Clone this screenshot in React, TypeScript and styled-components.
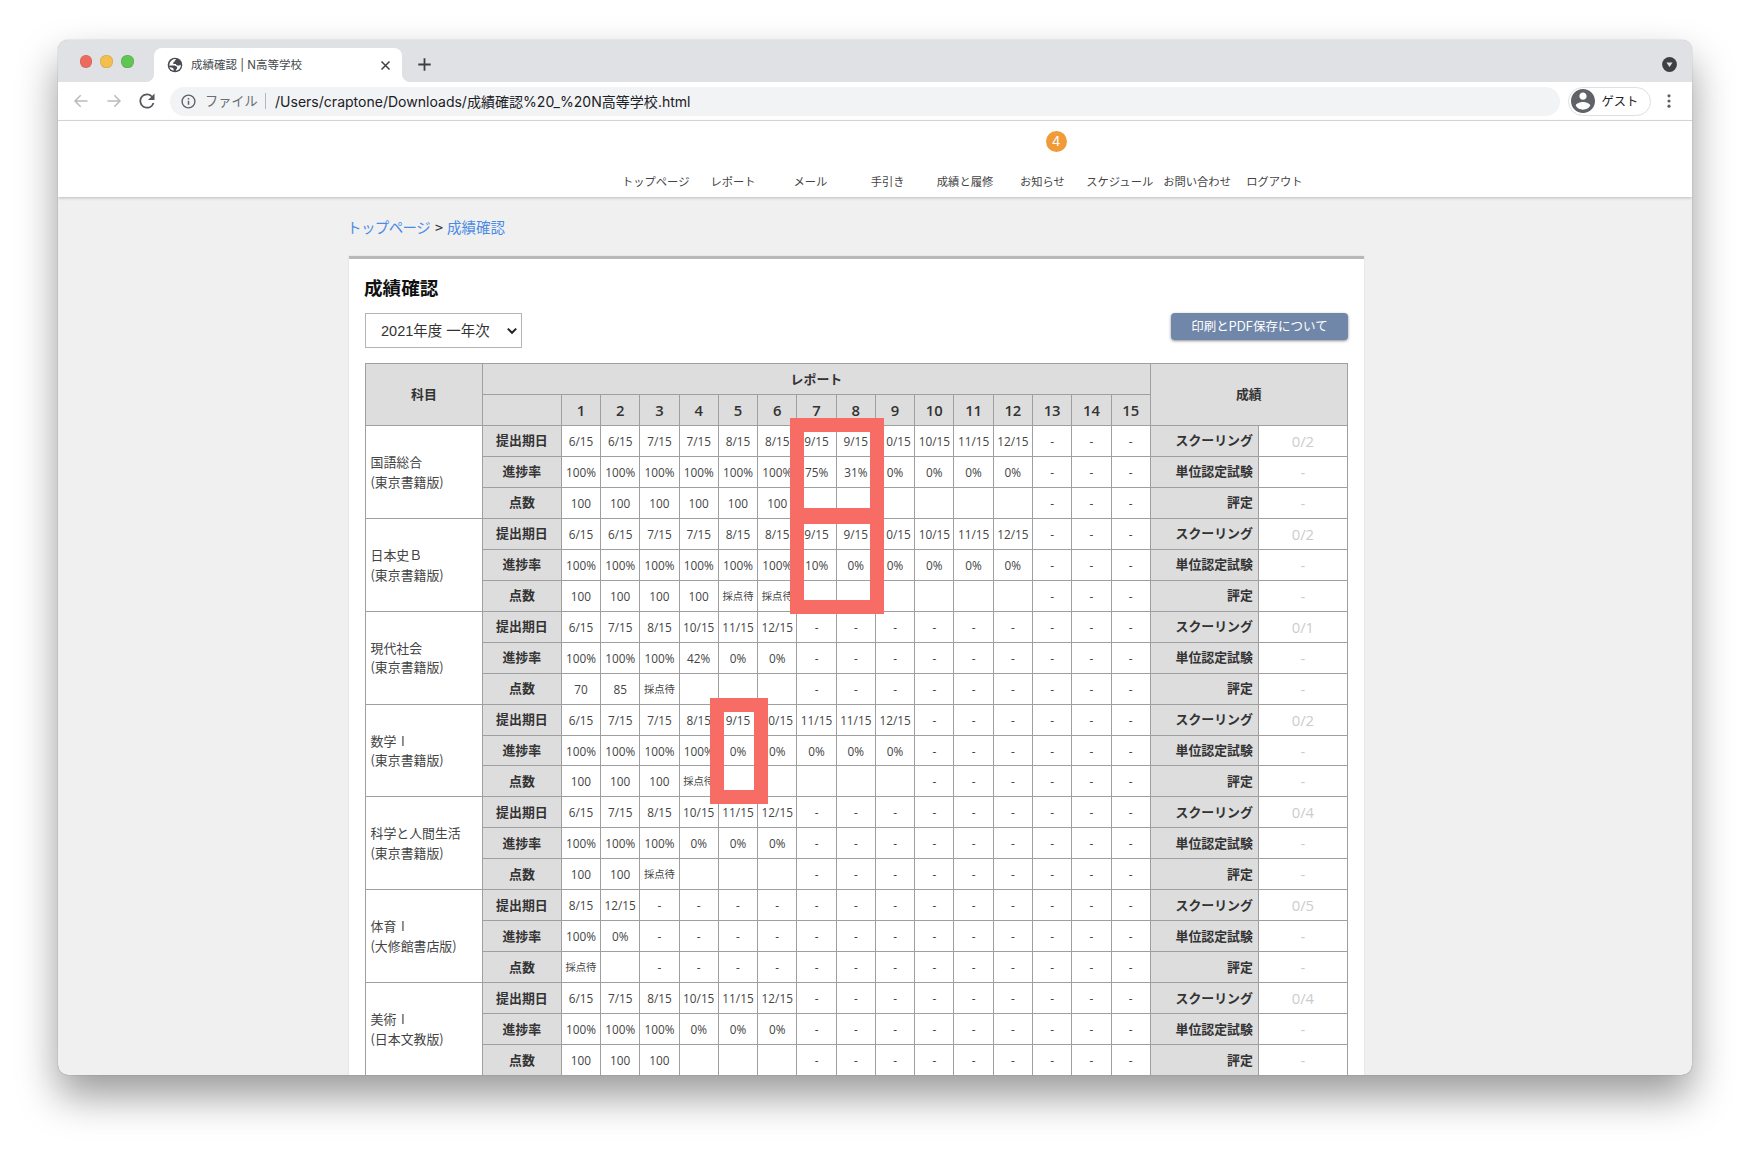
import React from 'react';
import styled, { createGlobalStyle } from 'styled-components';

const JP = `"Noto Sans CJK JP", sans-serif`;
const UI = `Inter, "Noto Sans CJK JP", sans-serif`;
const DIGITS = `"Open Sans", "Noto Sans CJK JP", sans-serif`;
const LINE = '#9f9f9f';

const GlobalStyle = createGlobalStyle`
  * { box-sizing: border-box; }
  body { margin: 0; background: #fff; font-family: ${JP}; overflow: hidden; }
  svg { display: block; flex: none; }
`;

const Desktop = styled.div`
  width: 1750px;
  height: 1152px;
  padding: 40px 58px 77px;
  overflow: hidden;
`;

const Window = styled.div`
  display: flex;
  flex-direction: column;
  height: 1035px;
  border-radius: 10px;
  overflow: hidden;
  background: #f0f0f0;
  box-shadow: 0 0 1px rgba(0, 0, 0, 0.5), 0 21px 40px rgba(0, 0, 0, 0.4);
`;

const TabStrip = styled.div`
  display: flex;
  align-items: flex-end;
  flex: none;
  height: 42px;
  background: #dfe1e5;
  padding-right: 15px;
`;

const Lights = styled.div`
  display: flex;
  align-self: flex-start;
  gap: 8px;
  width: 96px;
  padding: 15px 0 0 21.5px;
`;

const Light = styled.span<{ $color: string }>`
  width: 12.7px;
  height: 12.7px;
  border-radius: 50%;
  background: ${(p) => p.$color};
  box-shadow: inset 0 0 0 0.5px rgba(0, 0, 0, 0.15);
`;

const Tab = styled.div`
  position: relative;
  display: flex;
  align-items: center;
  width: 248px;
  height: 34px;
  padding: 0 10px 0 13px;
  border-radius: 8px 8px 0 0;
  background: #fff;
  &::before,
  &::after {
    content: '';
    position: absolute;
    bottom: 0;
    width: 8px;
    height: 8px;
  }
  &::before {
    left: -8px;
    background: radial-gradient(circle at 0 0, transparent 7.5px, #fff 8.5px);
  }
  &::after {
    right: -8px;
    background: radial-gradient(circle at 100% 0, transparent 7.5px, #fff 8.5px);
  }
`;

const TabTitle = styled.span`
  flex: 1;
  margin-left: 8px;
  font: 11.5px/16px ${UI};
  color: #45494d;
  white-space: nowrap;
`;

const NewTab = styled.div`
  flex: 1;
  padding: 0 0 11px 16px;
`;

const TabSearch = styled.div`
  padding-bottom: 10px;
`;

const Toolbar = styled.div`
  display: flex;
  align-items: center;
  flex: none;
  height: 39px;
  padding: 0 17px 0 15px;
  border-bottom: 1px solid #dadbdd;
  background: #fff;
`;

const NavButtons = styled.div`
  display: flex;
  align-items: center;
  gap: 17px;
  width: 97px;
`;

const Omnibox = styled.div`
  display: flex;
  align-items: center;
  width: 1390px;
  height: 29px;
  padding-left: 11px;
  border-radius: 15px;
  background: #f1f3f4;
  font: 14.04px/20px ${UI};
  color: #202124;
  white-space: nowrap;
`;

const Scheme = styled.span`
  width: 61px;
  margin-left: 9px;
  padding-right: 8px;
  border-right: 1px solid #b5b8bb;
  font-size: 13.2px;
  line-height: 16px;
  color: #6a6e73;
`;

const Url = styled.span`
  margin-left: 9px;
  padding-top: 1px;
`;

const Profile = styled.div`
  display: flex;
  align-items: center;
  gap: 7px;
  width: 83px;
  height: 29px;
  margin: 0 12px 0 8px;
  padding-left: 1.5px;
  border: 1px solid #dddfe1;
  border-radius: 15px;
  font: 12.3px/18px ${JP};
  color: #202124;
`;

const SiteHeader = styled.header`
  position: relative;
  display: flex;
  flex: none;
  align-items: flex-end;
  height: 76px;
  padding: 0 0 7px 559px;
  background: #fff;
  box-shadow: 0 1px 3px rgba(0, 0, 0, 0.22);
`;

const SiteLink = styled.a`
  position: relative;
  width: 77.35px;
  text-align: center;
  font-size: 11.3px;
  line-height: 18px;
  color: #444;
  white-space: nowrap;
`;

const Badge = styled.span`
  position: absolute;
  left: 42px;
  top: -41px;
  width: 21px;
  height: 21px;
  border-radius: 50%;
  background: #f19a38;
  color: #fff;
  font: 13.5px/21px ${UI};
`;

const Content = styled.main`
  width: 1015px;
  margin-left: 291px;
`;

const Breadcrumb = styled.nav`
  display: flex;
  align-items: center;
  height: 59px;
  margin-left: -2px;
  font-size: 14.5px;
  line-height: 20px;
  color: #333;
`;

const Crumb = styled.a<{ $wide?: boolean }>`
  width: ${(p) => (p.$wide ? '83px' : 'auto')};
  letter-spacing: ${(p) => (p.$wide ? '-0.6px' : '0')};
  white-space: nowrap;
  color: #4a8be4;
`;

const Separator = styled.span`
  margin: 0 4px 0 5px;
`;

const Card = styled.section`
  height: 1000px;
  padding: 0 16px;
  border-top: 3px solid #b8b8b8;
  background: #fff;
  box-shadow: 0 0 2px rgba(0, 0, 0, 0.1);
`;

const Title = styled.h1`
  margin: 0 0 0 -1px;
  padding-top: 16px;
  height: 54px;
  font-size: 18.6px;
  line-height: 24px;
  font-weight: 700;
  color: #111;
`;

const Controls = styled.div`
  display: flex;
  justify-content: space-between;
  align-items: flex-start;
  height: 50px;
`;

const YearSelect = styled.div`
  display: flex;
  align-items: center;
  justify-content: space-between;
  width: 157px;
  height: 35px;
  padding: 0 4px 0 15px;
  border: 1px solid #b4b4b4;
  font: 14.5px/20px "Liberation Sans", ${JP};
  color: #333;
`;

const HelpButton = styled.button`
  width: 177px;
  height: 27px;
  padding: 1px 0 0;
  border: 0;
  border-radius: 4px;
  background: #7187aa;
  box-shadow: 0 1px 3px rgba(0, 0, 0, 0.45);
  color: #fff;
  font: 12.5px/26px ${UI};
`;

const Grades = styled.div`
  position: relative;
  width: 983px;
  border-top: 1px solid ${LINE};
  border-left: 1px solid ${LINE};
`;

const COLUMNS = '117px 78.8px repeat(15, 39.27px) 108.1px 89.05px';

const HeadGrid = styled.div`
  display: grid;
  grid-template-columns: ${COLUMNS};
  grid-template-rows: 31px 31px;
`;

const SubjectGrid = styled.div`
  display: grid;
  grid-template-columns: ${COLUMNS};
  grid-template-rows: repeat(3, 30.96px);
`;

const Cell = styled.div<{ $small?: boolean }>`
  display: flex;
  align-items: center;
  justify-content: center;
  min-width: 0;
  border-right: 1px solid ${LINE};
  border-bottom: 1px solid ${LINE};
  background: #fff;
  color: #444;
  font-family: ${DIGITS};
  font-size: ${(p) => (p.$small ? '10.3px' : '11.8px')};
  line-height: 18px;
  white-space: nowrap;
`;

const HeadCell = styled(Cell)<{ $cols?: number; $rows?: number; $number?: boolean }>`
  grid-column: span ${(p) => p.$cols ?? 1};
  grid-row: span ${(p) => p.$rows ?? 1};
  padding-bottom: ${(p) => (p.$number ? 0 : 1)}px;
  background: #ddd;
  color: #333;
  font-family: ${(p) => (p.$number ? DIGITS : JP)};
  font-size: ${(p) => (p.$number ? '14.8px' : '12.9px')};
  font-weight: ${(p) => (p.$number ? 600 : 700)};
`;

const ResultLabel = styled(HeadCell)`
  justify-content: flex-end;
  padding-right: 5px;
`;

const ResultValue = styled(Cell)`
  font-size: 14.8px;
  color: #ccc;
`;

const SubjectName = styled(Cell)`
  grid-row: span 3;
  flex-direction: column;
  align-items: flex-start;
  padding: 0 0 0.5px 4.5px;
  font-family: ${JP};
  font-size: 12.9px;
  line-height: 19.7px;
`;

const Numeral = styled.span`
  display: inline-block;
  width: 13px;
  height: 12px;
  text-align: center;
  font: 13.6px/12px "Open Sans", sans-serif;
`;

const Marker = styled.div<{ $x: number; $y: number; $w: number; $h: number }>`
  position: absolute;
  left: ${(p) => p.$x}px;
  top: ${(p) => p.$y}px;
  width: ${(p) => p.$w}px;
  height: ${(p) => p.$h}px;
  border: 14px solid #f76d65;
`;

type Subject = {
  name: string;
  level?: string;
  publisher: string;
  due: string;
  progress: string;
  scores: string;
  schooling: string;
};

const W = '採点待';

const SUBJECTS: Subject[] = [
  {
    name: '国語総合', publisher: '(東京書籍版)', schooling: '0/2',
    due: '6/15 6/15 7/15 7/15 8/15 8/15 9/15 9/15 10/15 10/15 11/15 12/15',
    progress: '100% 100% 100% 100% 100% 100% 75% 31% 0% 0% 0% 0%',
    scores: '100 100 100 100 100 100',
  },
  {
    name: '日本史Ｂ', publisher: '(東京書籍版)', schooling: '0/2',
    due: '6/15 6/15 7/15 7/15 8/15 8/15 9/15 9/15 10/15 10/15 11/15 12/15',
    progress: '100% 100% 100% 100% 100% 100% 10% 0% 0% 0% 0% 0%',
    scores: `100 100 100 100 ${W} ${W}`,
  },
  {
    name: '現代社会', publisher: '(東京書籍版)', schooling: '0/1',
    due: '6/15 7/15 8/15 10/15 11/15 12/15',
    progress: '100% 100% 100% 42% 0% 0%',
    scores: `70 85 ${W}`,
  },
  {
    name: '数学', level: 'I', publisher: '(東京書籍版)', schooling: '0/2',
    due: '6/15 7/15 7/15 8/15 9/15 10/15 11/15 11/15 12/15',
    progress: '100% 100% 100% 100% 0% 0% 0% 0% 0%',
    scores: `100 100 100 ${W}`,
  },
  {
    name: '科学と人間生活', publisher: '(東京書籍版)', schooling: '0/4',
    due: '6/15 7/15 8/15 10/15 11/15 12/15',
    progress: '100% 100% 100% 0% 0% 0%',
    scores: `100 100 ${W}`,
  },
  {
    name: '体育', level: 'I', publisher: '(大修館書店版)', schooling: '0/5',
    due: '8/15 12/15',
    progress: '100% 0%',
    scores: W,
  },
  {
    name: '美術', level: 'I', publisher: '(日本文教版)', schooling: '0/4',
    due: '6/15 7/15 8/15 10/15 11/15 12/15',
    progress: '100% 100% 100% 0% 0% 0%',
    scores: '100 100 100',
  },
];

const NAV = ['トップページ', 'レポート', 'メール', '手引き', '成績と履修', 'お知らせ', 'スケジュール', 'お問い合わせ', 'ログアウト'];
const REPORTS = Array.from({ length: 15 }, (_, i) => i);

function SubjectRows({ subject }: { subject: Subject }) {
  const count = subject.due.split(' ').length;
  const rows = [
    { label: '提出期日', values: subject.due.split(' '), result: 'スクーリング', value: subject.schooling },
    { label: '進捗率', values: subject.progress.split(' '), result: '単位認定試験', value: '-' },
    { label: '点数', values: subject.scores.split(' '), result: '評定', value: '-' },
  ];
  return (
    <SubjectGrid>
      <SubjectName>
        <span>
          {subject.name}
          {subject.level && <Numeral>{subject.level}</Numeral>}
        </span>
        <span>{subject.publisher}</span>
      </SubjectName>
      {rows.map((row) => (
        <React.Fragment key={row.label}>
          <HeadCell>{row.label}</HeadCell>
          {REPORTS.map((i) => (
            <Cell key={i} $small={row.values[i] === W}>
              {i < count ? row.values[i] ?? '' : '-'}
            </Cell>
          ))}
          <ResultLabel>{row.result}</ResultLabel>
          <ResultValue>{row.value}</ResultValue>
        </React.Fragment>
      ))}
    </SubjectGrid>
  );
}

const GlobeIcon = () => (
  <svg width="16" height="16" viewBox="0 0 16 16">
    <circle cx="8" cy="8" r="7.3" fill="#484c50" />
    <path
      fill="#fff"
      d="M9.3 2.2C8.3 2.8 7.9 3.4 8 4.3 6.7 4.5 5.9 5.6 6.4 6.9c.9.2 1.6 0 2.5.1.3 1.3 1 1.6 2.1 1.6 1 .2 1.9-.2 2.9-.8A6 6 0 0 1 9 13.7c-.3-.5 0-1.2.4-1.5.9-.3 1-1.3.6-2.1-.8-1.2-1.9-1.5-3.2-1.6H2.1A6 6 0 0 0 6.6 13.700v-1.9l-1.4-1.1L2.3 9.900V7.900A6 6 0 0 1 9.3 2.200z"
      fillRule="evenodd"
    />
  </svg>
);

const ArrowIcon = ({ flip }: { flip?: boolean }) => (
  <svg width="16" height="16" viewBox="0 0 16 16" fill="none" stroke="#b9bbbe" strokeWidth="1.5">
    <path d={flip ? 'M1.5 8h12M8.3 2.2L14 8l-5.7 5.8' : 'M14.5 8h-12M7.7 2.2L2 8l5.7 5.8'} />
  </svg>
);

const ReloadIcon = () => (
  <svg width="16" height="16" viewBox="3.5 3.5 17 17">
    <path fill="#54585c" d="M17.65 6.35A7.958 7.958 0 0 0 12 4c-4.42 0-7.99 3.58-7.99 8s3.57 8 7.99 8c3.73 0 6.84-2.55 7.73-6h-1.9A6.2 6.2 0 0 1 12 18.2 6.2 6.2 0 1 1 12 5.8c1.71 0 3.24.71 4.35 1.85L13 11h7V4l-2.35 2.35z" />
  </svg>
);

const InfoIcon = () => (
  <svg width="15" height="15" viewBox="0 0 15 15" fill="none" stroke="#5f6368">
    <circle cx="7.5" cy="7.5" r="6.4" strokeWidth="1.4" />
    <path strokeWidth="1.5" d="M7.5 6.8v4M7.5 4v1.5" />
  </svg>
);

const AvatarIcon = () => (
  <svg width="24" height="24" viewBox="2 2 20 20">
    <path fill="#5f6368" d="M12 2C6.48 2 2 6.48 2 12s4.48 10 10 10 10-4.48 10-10S17.52 2 12 2zm0 3c1.66 0 3 1.34 3 3s-1.34 3-3 3-3-1.34-3-3 1.34-3 3-3zm0 14.2a7.2 7.2 0 0 1-6-3.22c.03-1.99 4-3.08 6-3.08 1.99 0 5.97 1.09 6 3.08a7.2 7.2 0 0 1-6 3.22z" />
  </svg>
);

export default function App() {
  return (
    <Desktop>
      <GlobalStyle />
      <Window>
        <TabStrip>
          <Lights>
            <Light $color="#ec6a5e" />
            <Light $color="#f4be4f" />
            <Light $color="#61c554" />
          </Lights>
          <Tab>
            <GlobeIcon />
            <TabTitle>成績確認 | N高等学校</TabTitle>
            <svg width="13" height="13" viewBox="0 0 13 13" stroke="#3c4043" strokeWidth="1.5">
              <path d="M2.5 2.5l8 8M10.5 2.5l-8 8" />
            </svg>
          </Tab>
          <NewTab>
            <svg width="13" height="13" viewBox="0 0 13 13" stroke="#3c4043" strokeWidth="1.8">
              <path d="M6.5 0.3v12.4M0.3 6.5h12.4" />
            </svg>
          </NewTab>
          <TabSearch>
            <svg width="15" height="15" viewBox="0 0 15 15">
              <circle cx="7.5" cy="7.5" r="7.4" fill="#3c4043" />
              <path d="M4.4 5.4h6.2L7.5 10z" fill="#dfe1e5" />
            </svg>
          </TabSearch>
        </TabStrip>
        <Toolbar>
          <NavButtons>
            <ArrowIcon />
            <ArrowIcon flip />
            <ReloadIcon />
          </NavButtons>
          <Omnibox>
            <InfoIcon />
            <Scheme>ファイル</Scheme>
            <Url>/Users/craptone/Downloads/成績確認%20_%20N高等学校.html</Url>
          </Omnibox>
          <Profile>
            <AvatarIcon />
            ゲスト
          </Profile>
          <svg width="12" height="14" viewBox="0 0 12 14" fill="#5f6368">
            <circle cx="6" cy="1.8" r="1.6" />
            <circle cx="6" cy="7" r="1.6" />
            <circle cx="6" cy="12.2" r="1.6" />
          </svg>
        </Toolbar>
        <SiteHeader>
          {NAV.map((label) => (
            <SiteLink key={label}>
              {label}
              {label === 'お知らせ' && <Badge>4</Badge>}
            </SiteLink>
          ))}
        </SiteHeader>
        <Content>
          <Breadcrumb>
            <Crumb $wide>トップページ</Crumb>
            <Separator>&gt;</Separator>
            <Crumb>成績確認</Crumb>
          </Breadcrumb>
          <Card>
            <Title>成績確認</Title>
            <Controls>
              <YearSelect>
                2021年度 一年次
                <svg width="10" height="8" viewBox="0 0 10 8" fill="none" stroke="#222" strokeWidth="2">
                  <path d="M0.8 1.6L5 5.8l4.2-4.2" />
                </svg>
              </YearSelect>
              <HelpButton>印刷とPDF保存について</HelpButton>
            </Controls>
            <Grades>
              <HeadGrid>
                <HeadCell $rows={2}>科目</HeadCell>
                <HeadCell $cols={16}>レポート</HeadCell>
                <HeadCell $cols={2} $rows={2}>成績</HeadCell>
                <HeadCell />
                {REPORTS.map((i) => (
                  <HeadCell key={i} $number>{i + 1}</HeadCell>
                ))}
              </HeadGrid>
              {SUBJECTS.map((subject) => (
                <SubjectRows key={subject.name} subject={subject} />
              ))}
              <Marker $x={424} $y={54} $w={94} $h={104} />
              <Marker $x={424} $y={146} $w={94} $h={104} />
              <Marker $x={344} $y={334} $w={58} $h={106} />
            </Grades>
          </Card>
        </Content>
      </Window>
    </Desktop>
  );
}
